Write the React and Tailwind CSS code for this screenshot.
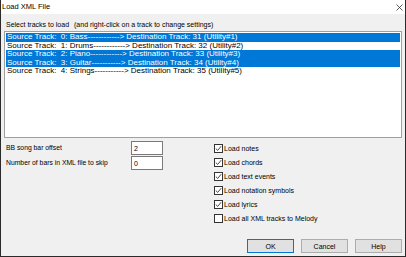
import React from "react";

const tracks = [
  { src: " 0: Bass", dash: "------------", dst: "31 (Utility#1)", sel: true },
  { src: " 1: Drums", dash: "------------", dst: "32 (Utility#2)", sel: false },
  { src: " 2: Piano", dash: "------------", dst: "33 (Utility#3)", sel: true },
  { src: " 3: Guitar", dash: "-----------", dst: "34 (Utility#4)", sel: true },
  { src: " 4: Strings", dash: "-----------", dst: "35 (Utility#5)", sel: false },
];

const options = [
  { label: "Load notes", checked: true },
  { label: "Load chords", checked: true },
  { label: "Load text events", checked: true },
  { label: "Load notation symbols", checked: true },
  { label: "Load lyrics", checked: true },
  { label: "Load all XML tracks to Melody", checked: false },
];

function CheckBox({ checked }) {
  return (
    <div className="w-[9px] h-[9px] border border-[#333] bg-white flex items-center justify-center">
      {checked && (
        <svg width="7" height="7" viewBox="0 0 7 7">
          <path d="M0.8 3.6 L2.7 5.4 L6.2 1.2" fill="none" stroke="#333" strokeWidth="0.9" />
        </svg>
      )}
    </div>
  );
}

function Button({ children, primary }) {
  return (
    <button
      className={
        "w-[47px] h-[14px] bg-[#e1e1e1] text-[7px] leading-none flex items-center justify-center border " +
        (primary ? "border-[#0078d7]" : "border-[#adadad]")
      }
    >
      {children}
    </button>
  );
}

export default function App() {
  return (
    <div
      className="w-[406px] h-[257px] bg-[#f0f0f0] border-x border-b border-[#2b2b2b] flex flex-col text-black overflow-hidden"
      style={{ fontFamily: '"Liberation Sans", Arial, sans-serif' }}
    >
      {/* title bar */}
      <div className="h-[14px] bg-white flex items-center justify-between pl-[1px] pr-[2px]">
        <span className="text-[7.5px] leading-none">Load XML File</span>
        <svg width="7" height="7" viewBox="0 0 7 7">
          <path d="M0.5 0.5 L6.5 6.5 M6.5 0.5 L0.5 6.5" stroke="#333" strokeWidth="0.8" />
        </svg>
      </div>

      <div className="flex flex-col px-[3px]">
        <div className="mt-[6px] h-[9px] pl-[2px] flex items-center text-[7px] leading-none whitespace-pre">
          <span>Select tracks to load</span>
          <span className="ml-[5px]">(and right-click on a track to change settings)</span>
        </div>

        {/* track list */}
        <div className="mt-[2px] h-[107px] border border-[#a0a0a0] bg-white p-[1px]">
          {tracks.map((t, i) => (
            <div
              key={i}
              className={
                "h-[8.5px] flex items-center pl-[1px] text-[8px] leading-none whitespace-pre " +
                (t.sel ? "bg-[#0078d7] text-white" : "")
              }
            >
              {"Source Track: " + t.src + t.dash + "> Destination Track: " + t.dst}
            </div>
          ))}
        </div>

        {/* settings */}
        <div className="mt-[3px] flex">
          <div className="w-[210px] flex flex-col text-[6.8px] leading-none">
            <div className="h-[14px] flex items-center pl-[2px]">
              <span className="w-[125px]">BB song bar offset</span>
              <div className="w-[32px] h-[14px] bg-white border border-[#7a7a7a] flex items-center pl-[2px] text-[7px]">2</div>
            </div>
            <div className="h-[14px] mt-[1px] flex items-center pl-[2px]">
              <span className="w-[125px]">Number of bars in XML file to skip</span>
              <div className="w-[32px] h-[14px] bg-white border border-[#7a7a7a] flex items-center pl-[2px] text-[7px]">0</div>
            </div>
          </div>

          <div className="flex-1 flex flex-col text-[7px] leading-none">
            {options.map((o, i) => (
              <div key={i} className="h-[14px] flex items-center gap-[1px]">
                <CheckBox checked={o.checked} />
                <span>{o.label}</span>
              </div>
            ))}
          </div>
        </div>

        <div className="mt-[14px] flex justify-end gap-[7px]">
          <Button primary>OK</Button>
          <Button>Cancel</Button>
          <Button>Help</Button>
        </div>
      </div>
    </div>
  );
}
